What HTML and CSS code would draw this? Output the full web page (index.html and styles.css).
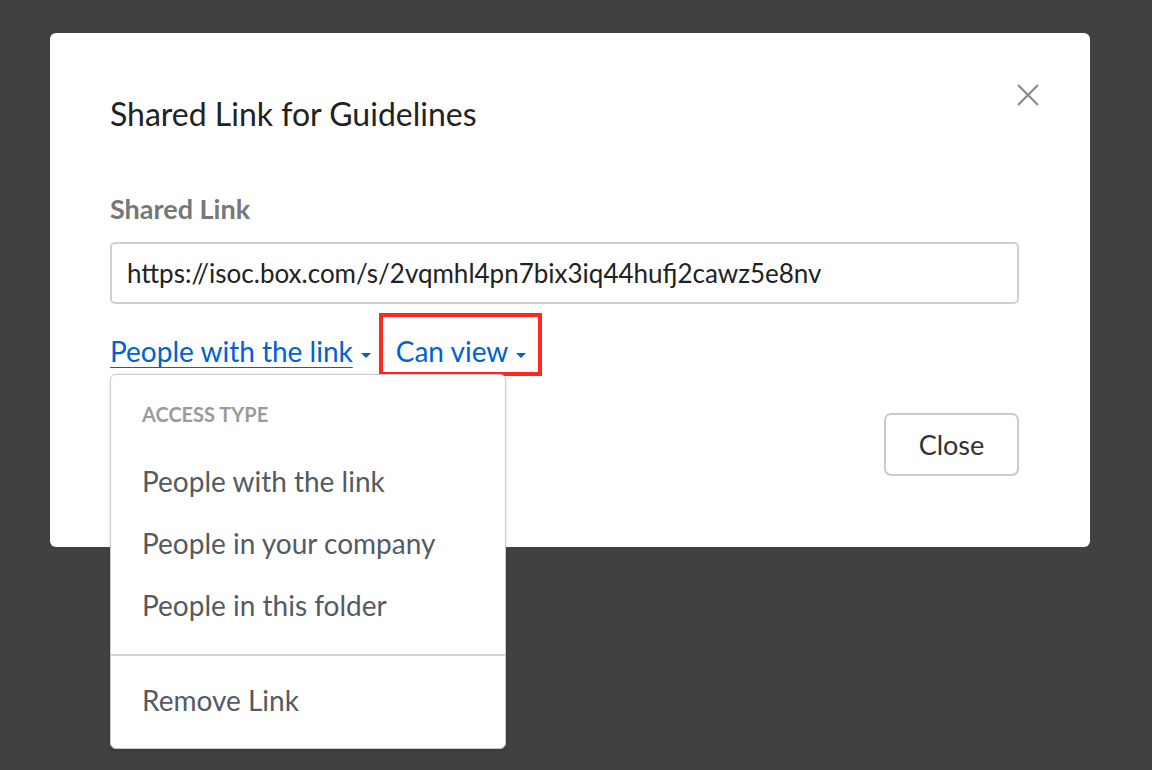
FILE: index.html
```html
<!DOCTYPE html>
<html lang="en">
<head>
<meta charset="utf-8">
<title>Shared Link for Guidelines</title>
<link rel="stylesheet" href="styles.css">
</head>
<body>
<div class="modal">
  <button class="close-x" aria-label="Close">
    <svg width="22" height="22" viewBox="0 0 22 22"><path d="M1 1 L21 21 M21 1 L1 21" stroke="#8a8a8a" stroke-width="2.2" fill="none"/></svg>
  </button>
  <h1 class="title">Shared Link for Guidelines</h1>
  <div class="label">Shared Link</div>
  <div class="url-box">https://isoc.box.com/s/2vqmhl4pn7bix3iq44hufj2cawz5e8nv</div>
  <div class="links-row">
    <span class="dd-link access"><span class="u">People with the link</span><span class="caret"></span></span>
    <span class="dd-link perm">Can view<span class="caret"></span><span class="highlight"></span></span>
    <div class="menu">
      <div class="menu-header">ACCESS TYPE</div>
      <div class="menu-item">People with the link</div>
      <div class="menu-item">People in your company</div>
      <div class="menu-item">People in this folder</div>
      <div class="menu-sep"></div>
      <div class="menu-item remove">Remove Link</div>
    </div>
  </div>
  <div class="footer">
    <button class="btn">Close</button>
  </div>
</div>
</body>
</html>
```

FILE: styles.css
```css
html, body {
  margin: 0;
  padding: 0;
}
body {
  background: #414141;
  font-family: Lato, "Noto Sans", sans-serif;
  width: 1152px;
  height: 770px;
  overflow: hidden;
}
.modal {
  position: relative;
  box-sizing: border-box;
  width: 1040px;
  margin: 33px 0 0 50px;
  background: #fff;
  border-radius: 6px;
  padding: 62px 71px 71px 60px;
  display: flex;
  flex-direction: column;
}
.close-x {
  position: absolute;
  top: 51px;
  left: 967px;
  width: 22px;
  height: 22px;
  padding: 0;
  border: 0;
  background: none;
  display: flex;
}
.title {
  margin: 0;
  font-size: 32px;
  line-height: 38px;
  font-weight: 400;
  color: #222;
}
.label {
  margin-top: 60px;
  font-size: 27px;
  line-height: 32px;
  font-weight: 700;
  color: #777;
}
.url-box {
  margin-top: 17px;
  box-sizing: border-box;
  height: 62px;
  border: 2px solid #cfcfcf;
  border-radius: 5px;
  padding: 0 15px;
  display: flex;
  align-items: center;
  font-size: 26px;
  color: #222;
}
.links-row {
  position: relative;
  margin-top: 30px;
  display: flex;
  align-items: baseline;
  gap: 25px;
  font-size: 28px;
  line-height: 34px;
  color: #0061d5;
}
.dd-link {
  position: relative;
  display: flex;
  align-items: baseline;
}
.u {
  text-decoration: underline;
  text-decoration-thickness: 1px;
  text-underline-offset: 5px;
}
.caret {
  display: inline-block;
  width: 0;
  height: 0;
  margin-left: 8px;
  border-left: 5px solid transparent;
  border-right: 5px solid transparent;
  border-top: 5px solid #0061d5;
  position: relative;
  top: -4px;
}
.highlight {
  position: absolute;
  left: -17px;
  top: -21px;
  width: 163px;
  height: 63px;
  box-sizing: border-box;
  border: 4px solid #fb2a1f;
}
.menu {
  position: absolute;
  left: 0;
  top: 40px;
  width: 396px;
  box-sizing: border-box;
  background: #fff;
  border: 1px solid #c8cbcf;
  border-radius: 6px;
  box-shadow: 0 1px 4px rgba(0,0,0,0.12);
  padding: 27px 0 17px;
  z-index: 2;
}
.menu-header {
  padding-left: 31px;
  font-size: 20px;
  line-height: 24px;
  font-weight: 700;
  color: #9b9b9b;
  margin-bottom: 24px;
}
.menu-item {
  padding-left: 31px;
  font-size: 28px;
  line-height: 62px;
  height: 62px;
  color: #545a63;
}
.menu-sep {
  margin-top: 18px;
  margin-bottom: 13px;
  height: 2px;
  background: #d3d5d8;
}
.footer {
  margin-top: 45px;
  display: flex;
  justify-content: flex-end;
}
.btn {
  box-sizing: border-box;
  width: 135px;
  height: 63px;
  background: #fff;
  border: 2px solid #c8cbcf;
  border-radius: 7px;
  font-family: Lato, "Noto Sans", sans-serif;
  font-size: 27px;
  color: #333;
  padding: 0;
}
```
